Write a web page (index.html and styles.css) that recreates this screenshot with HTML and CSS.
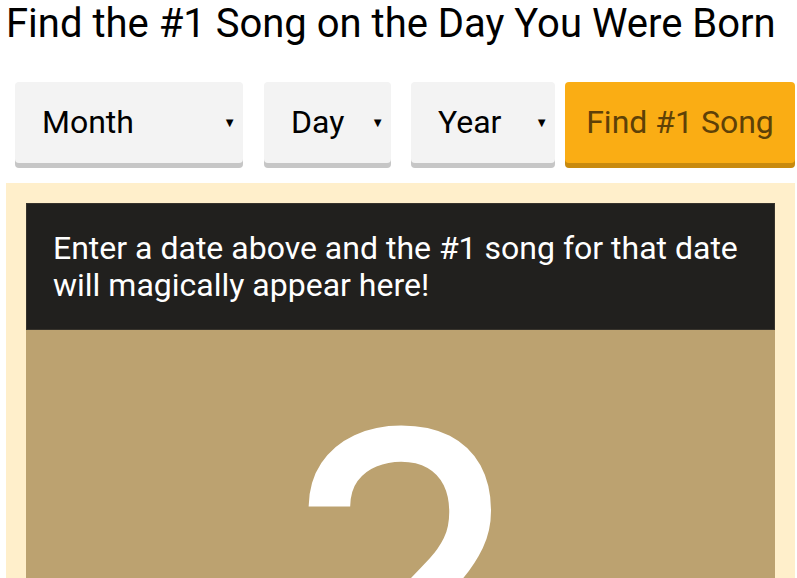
FILE: index.html
```html
<!DOCTYPE html>
<html lang="en">

<head>
    <meta charset="UTF-8" />
    <meta name="viewport" content="width=device-width, initial-scale=1.0" />
    <title>#1 Song on Your Birthday</title>
    <link rel="stylesheet" href="styles.css">
</head>

<body>
    <h1>Find the #1 Song on the Day You Were Born</h1>

    <!-- Date pickers -->
    <form class="date-form">
        <div class="picker picker-month">
            <select>
                <option>Month</option>
            </select>
            <span class="arrow">&#9660;</span>
        </div>
        <div class="picker picker-day">
            <select>
                <option>Day</option>
            </select>
            <span class="arrow">&#9660;</span>
        </div>
        <div class="picker picker-year">
            <select>
                <option>Year</option>
            </select>
            <span class="arrow">&#9660;</span>
        </div>
        <button type="button" class="find-btn">Find #1 Song</button>
    </form>

    <!-- Result -->
    <div class="result">
        <div class="result-msg">
            Enter a date above and the #1 song for that date will magically appear here!
        </div>
        <div class="result-art">
            <span class="mystery">?</span>
        </div>
    </div>
</body>

</html>
```

FILE: styles.css
```css
/* === Base === */
* {
    margin: 0;
    padding: 0;
    box-sizing: border-box;
}

body {
    font-family: Roboto, 'Liberation Sans', sans-serif;
    background-color: #FFFFFF;
    color: #000000;
    padding: 0 2px 0 6px;
    height: 578px;
    overflow: hidden;
}

h1 {
    font-size: 40px;
    font-weight: 400;
    line-height: 48px;
}

/* === Date form === */
.date-form {
    display: flex;
    margin-top: 34px;
    padding-left: 9px;
}

.picker {
    position: relative;
    height: 81px;
    margin-right: 20px;
    background-color: #F3F3F3;
    border-radius: 4px;
    box-shadow: 0 5px 0 #C6C6C6;
}

.picker-month {
    width: 228px;
    margin-right: 21px;
}

.picker-day {
    width: 127px;
}

.picker-year {
    width: 144px;
    margin-right: 10px;
}

.picker select {
    appearance: none;
    -webkit-appearance: none;
    width: 100%;
    height: 100%;
    border: none;
    background: transparent;
    font-family: inherit;
    font-size: 32px;
    color: #000000;
    padding-left: 27px;
    padding-bottom: 2px;
    outline: none;
}

.arrow {
    position: absolute;
    right: 7px;
    top: 34px;
    font-size: 13px;
    line-height: 13px;
    pointer-events: none;
}

.find-btn {
    flex: 1;
    height: 81px;
    border: none;
    border-radius: 4px;
    background-color: #FAAD14;
    box-shadow: 0 5px 0 #C88A0E;
    font-family: inherit;
    font-size: 32px;
    color: #5E4107;
    padding-bottom: 2px;
    cursor: pointer;
}

/* === Result panel === */
.result {
    margin-top: 20px;
    padding: 20px;
    background-color: #FFEFCB;
}

.result-msg {
    background-color: #21201E;
    border: 1px solid #37332C;
    color: #FFFFFF;
    font-size: 32px;
    line-height: 37px;
    padding: 26px 26px 25px;
}

.result-art {
    height: 520px;
    background-color: #BCA270;
    text-align: center;
    padding-top: 40px;
}

.mystery {
    display: inline-block;
    font-size: 460px;
    line-height: 1;
    font-weight: 400;
    color: #FFFFFF;
}
```
